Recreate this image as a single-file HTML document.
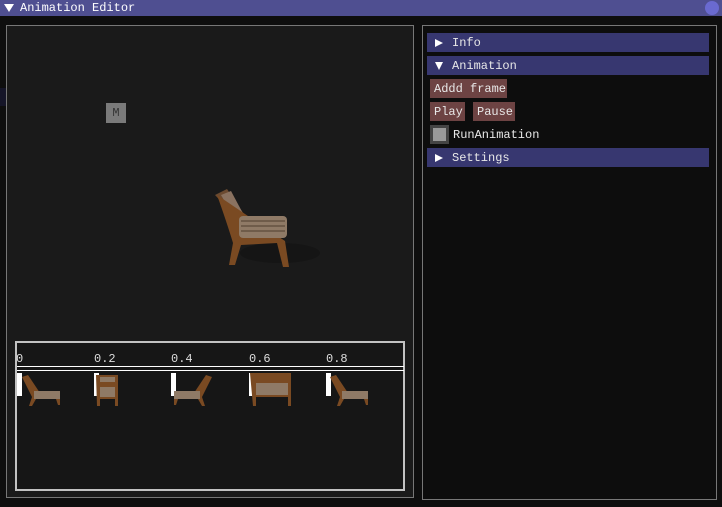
<!DOCTYPE html>
<html><head><style>
*{margin:0;padding:0;box-sizing:border-box}
body{width:722px;height:507px;background:#0e0e0e;position:relative;overflow:hidden;font-family:"Liberation Mono","DejaVu Sans Mono",monospace;font-size:12px;color:#e8e8e8}
.a{position:absolute}
.hdr{position:absolute;left:427px;width:282px;height:19px;background:#373770;line-height:20px;padding-left:25px}
.tri{position:absolute;left:8px;top:5px;width:0;height:0}
.btn{position:absolute;height:19px;background:#6d4343;line-height:20px;padding-left:4px}
.lbl{position:absolute;top:352px;font-size:12px;color:#ddd}
.mk{position:absolute;top:373px;width:5px;height:23px;background:#fff}
</style></head><body>
<div class="a" style="left:0;top:0;width:722px;height:16px;background:#4f4f91"></div>
<div class="a" style="left:4px;top:4px;width:0;height:0;border-left:5px solid transparent;border-right:5px solid transparent;border-top:8px solid #fff"></div>
<div class="a" style="left:20px;top:0;line-height:16px;color:#fff">Animation Editor</div>
<div class="a" style="left:705px;top:1px;width:14px;height:14px;border-radius:50%;background:#6a6ad0"></div>
<div class="a" style="left:0;top:88px;width:6px;height:18px;background:#151528"></div>

<div class="a" style="left:6px;top:25px;width:408px;height:473px;border:1px solid #777;background:#1a1a1a"></div>
<div class="a" style="left:106px;top:103px;width:20px;height:20px;background:#7a7a7a;color:#333;text-align:center;line-height:20px">M</div>

<svg class="a" style="left:205px;top:183px" width="115" height="90" viewBox="0 0 115 90">
<ellipse cx="75" cy="70" rx="40" ry="10" fill="#151515"/>
<path d="M10 12 L22 6 L45 40 L40 44 Z" fill="#6b4a30"/>
<path d="M16 12 L26 8 L42 38 L32 40 Z" fill="#8a7260"/>
<path d="M12 12 Q22 40 28 60 L24 82 L30 82 L36 62 L72 60 L78 84 L84 84 L80 58 Z" fill="#7a4a22"/>
<rect x="34" y="33" width="48" height="22" rx="4" fill="#8f7a66"/>
<path d="M36 38h44M36 43h44M36 48h44" stroke="#6f5c4a" stroke-width="2"/>
</svg>

<div class="a" style="left:15px;top:341px;width:390px;height:150px;border:2px solid #c2c2c2;background:#161616"></div>
<div class="a" style="left:17px;top:366px;width:387px;height:5px;border-top:1px solid #fff;border-bottom:1px solid #fff"></div>
<div class="lbl" style="left:16px">0</div>
<div class="lbl" style="left:94px">0.2</div>
<div class="lbl" style="left:171px">0.4</div>
<div class="lbl" style="left:249px">0.6</div>
<div class="lbl" style="left:326px">0.8</div>
<div class="mk" style="left:17px"></div>
<div class="mk" style="left:94px"></div>
<div class="mk" style="left:171px"></div>
<div class="mk" style="left:249px"></div>
<div class="mk" style="left:326px"></div>
<svg class="a" style="left:20px;top:373px" width="390" height="35">
<g fill="#7a4a22">
<path d="M2 4 L8 2 L20 20 L40 20 L40 32 L38 32 L36 26 L16 26 L12 33 L9 33 L12 24 Z"/>
<path d="M76 2 H98 V33 H95 V26 H80 V33 H77 Z"/>
<path d="M192 4 L186 2 L174 20 L154 20 L154 32 L156 32 L158 26 L178 26 L182 33 L185 33 L182 24 Z"/>
<path d="M230 0 H271 V33 H268 V24 H236 V33 H233 Z"/>
<path d="M310 4 L316 2 L328 20 L348 20 L348 32 L346 32 L344 26 L324 26 L320 33 L317 33 L320 24 Z"/>
</g>
<g fill="#8f7a66">
<rect x="14" y="18" width="26" height="8"/>
<rect x="80" y="4" width="15" height="5"/><rect x="80" y="14" width="15" height="10"/>
<rect x="154" y="18" width="26" height="8"/>
<rect x="236" y="10" width="32" height="12"/>
<rect x="322" y="18" width="26" height="8"/>
</g>
</svg>

<div class="a" style="left:422px;top:25px;width:295px;height:475px;border:1px solid #777;background:#0d0d0d"></div>
<div class="hdr" style="top:33px"><div class="tri" style="border-top:4px solid transparent;border-bottom:4px solid transparent;border-left:8px solid #fff;top:6px"></div>Info</div>
<div class="hdr" style="top:56px"><div class="tri" style="border-left:4px solid transparent;border-right:4px solid transparent;border-top:8px solid #fff;top:6px"></div>Animation</div>
<div class="btn" style="left:430px;top:79px;width:77px">Addd frame</div>
<div class="btn" style="left:430px;top:102px;width:35px">Play</div>
<div class="btn" style="left:473px;top:102px;width:42px">Pause</div>
<div class="a" style="left:430px;top:125px;width:19px;height:19px;background:#444;padding:3px"><div style="width:13px;height:13px;background:#999"></div></div>
<div class="a" style="left:453px;top:125px;line-height:20px">RunAnimation</div>
<div class="hdr" style="top:148px"><div class="tri" style="border-top:4px solid transparent;border-bottom:4px solid transparent;border-left:8px solid #fff;top:6px"></div>Settings</div>
</body></html>
